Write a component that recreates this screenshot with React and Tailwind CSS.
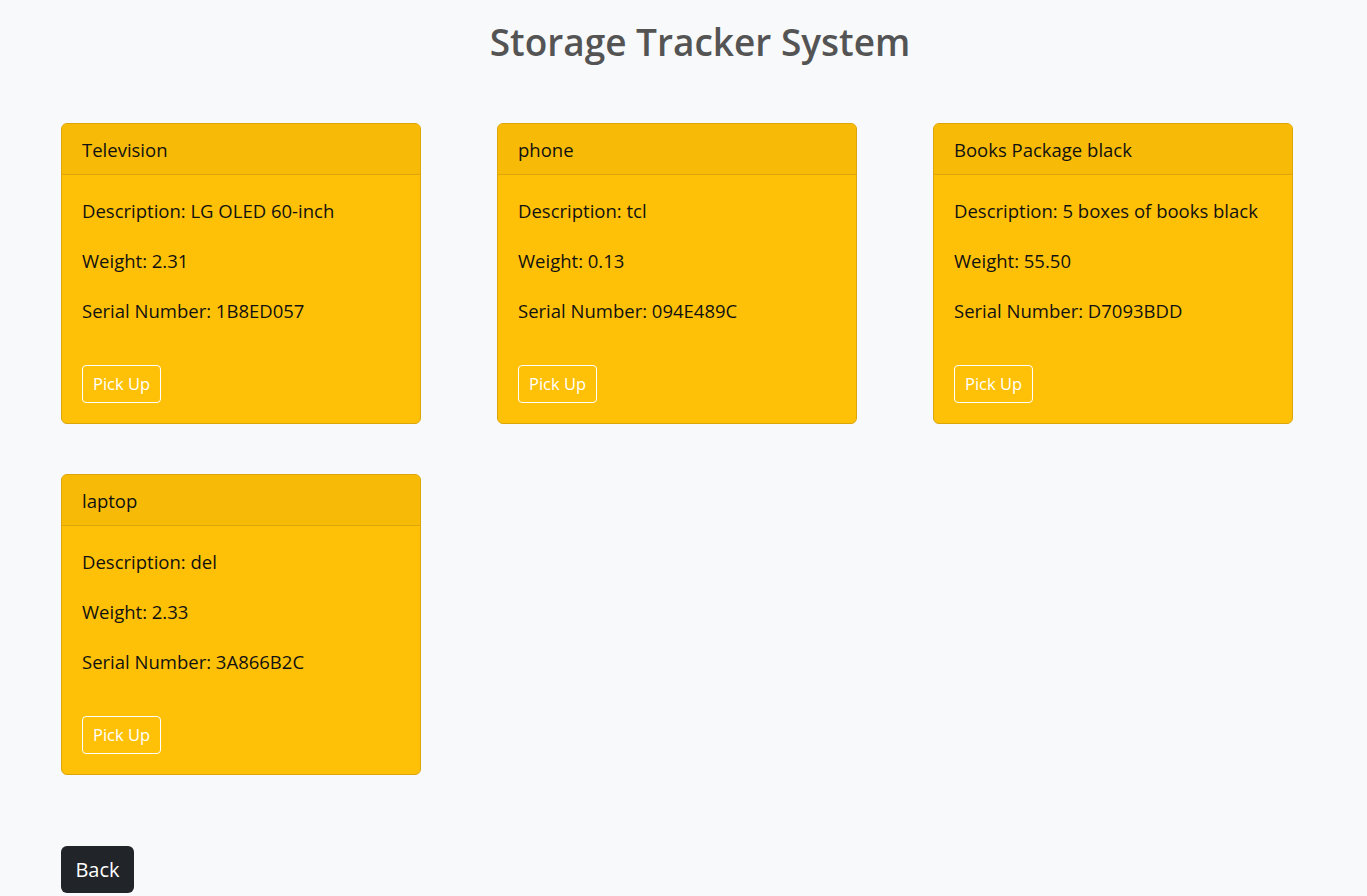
import React from 'react';

const items = [
  { name: 'Television', description: 'LG OLED 60-inch', weight: '2.31', serial: '1B8ED057' },
  { name: 'phone', description: 'tcl', weight: '0.13', serial: '094E489C' },
  { name: 'Books Package black', description: '5 boxes of books black', weight: '55.50', serial: 'D7093BDD' },
  { name: 'laptop', description: 'del', weight: '2.33', serial: '3A866B2C' },
];

function ItemCard({ item }) {
  return (
    <div className="h-[301px] rounded-[6px] border border-[#dca50a] bg-[#ffc107] overflow-hidden flex flex-col">
      <div className="h-[51px] flex items-center pt-[2px] px-5 bg-[#f7bb07] border-b border-[#dca50a] text-[18.5px] text-[#111]">
        {item.name}
      </div>
      <div className="flex flex-col px-5 pt-[22px] text-[18.5px] text-[#111]">
        <p className="h-[27px] leading-[27px]">Description: {item.description}</p>
        <p className="h-[27px] leading-[27px] mt-[23px]">Weight: {item.weight}</p>
        <p className="h-[27px] leading-[27px] mt-[23px]">Serial Number: {item.serial}</p>
        <div className="mt-[41px]">
          <button className="h-[38px] px-[10px] rounded-[4px] border border-white text-white text-[16.5px]">
            Pick Up
          </button>
        </div>
      </div>
    </div>
  );
}

export default function App() {
  return (
    <div className="min-h-[896px] bg-[#f8f9fa] font-['Segoe_UI','Open_Sans',sans-serif]">
      <h1 className="pt-[14px] h-[74px] pl-[33px] text-center text-[37px] font-semibold leading-[56px] text-[#545454]">
        Storage Tracker System
      </h1>
      <div className="pl-[61px] pt-[49px] grid grid-cols-[360px_360px_360px] gap-x-[76px] gap-y-[50px]">
        {items.map((item) => (
          <ItemCard key={item.serial} item={item} />
        ))}
      </div>
      <div className="pl-[61px] pt-[71px]">
        <button className="h-[47px] w-[73px] rounded-[6px] bg-[#212529] text-white text-[20px]">Back</button>
      </div>
    </div>
  );
}
